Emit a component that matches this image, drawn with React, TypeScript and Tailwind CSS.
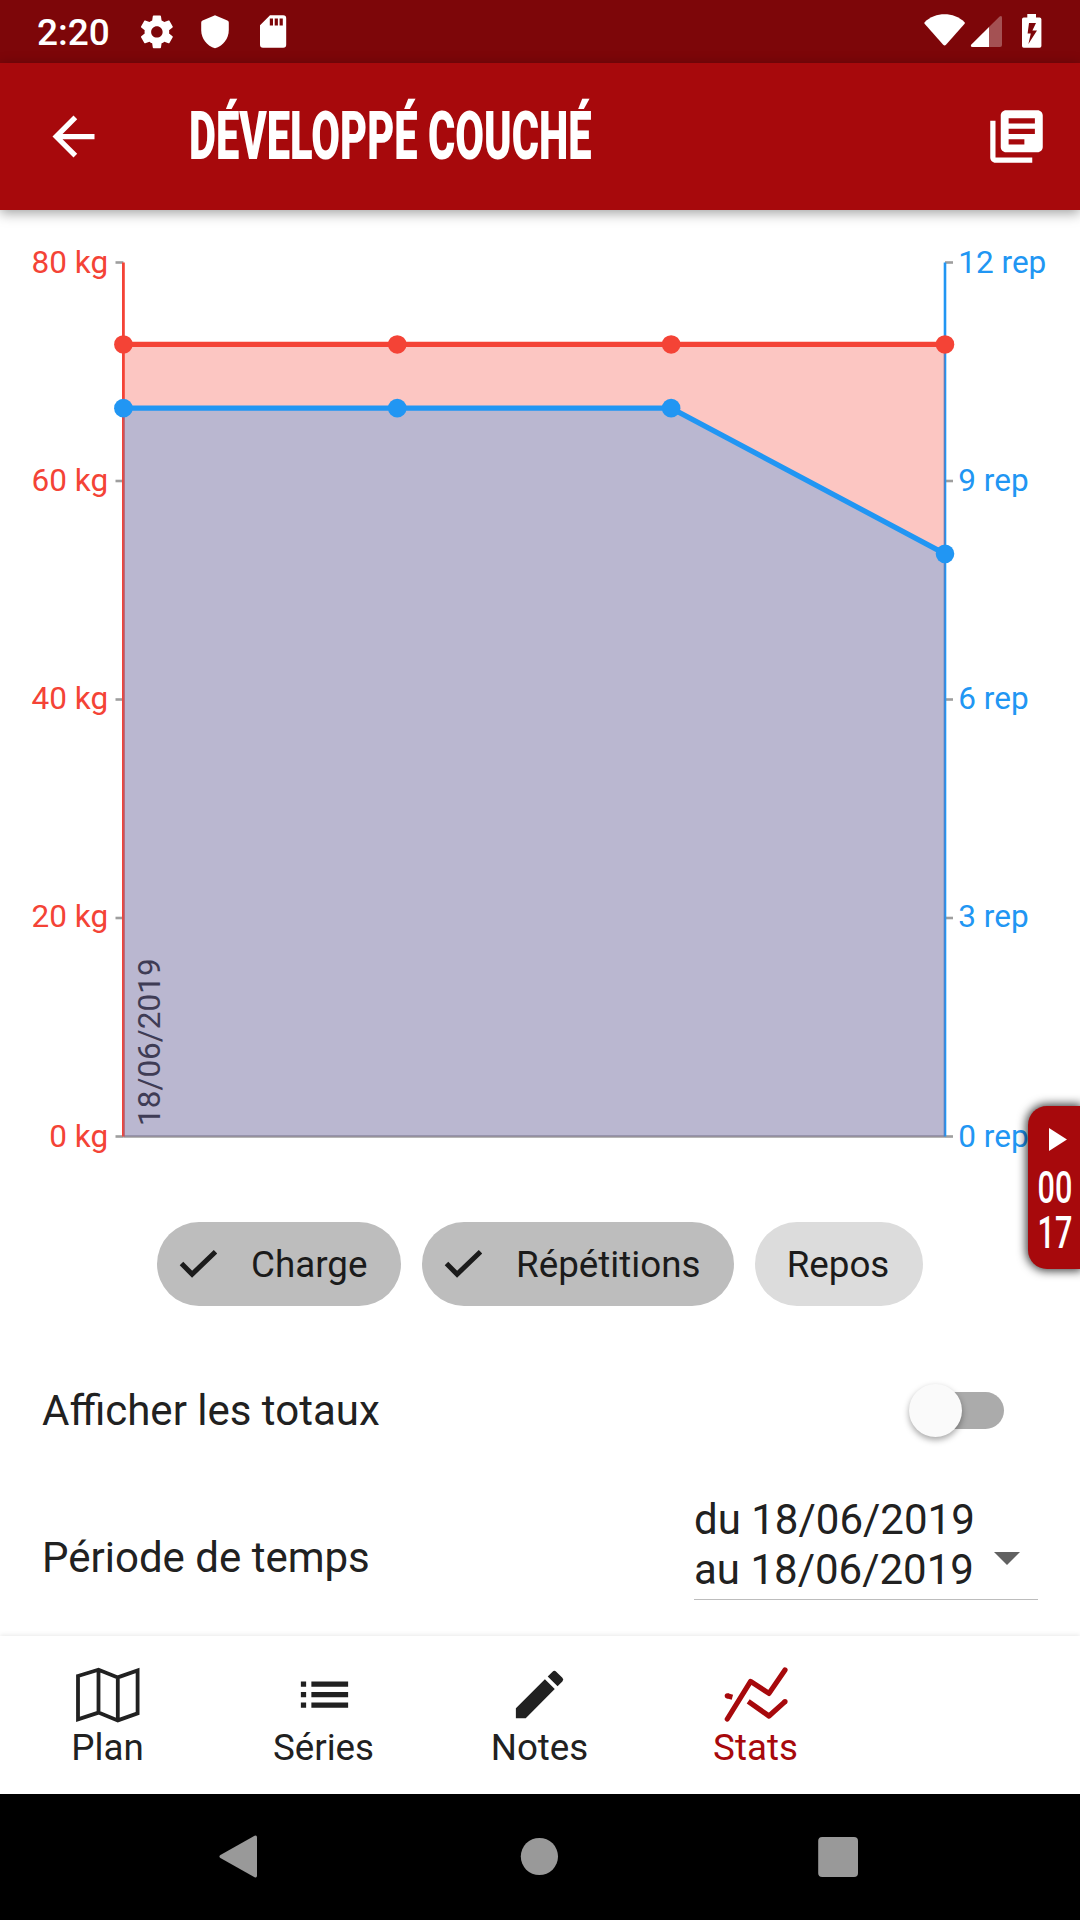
import type { ReactNode } from "react";
import { MdArrowBack, MdEdit, MdLibraryBooks } from "react-icons/md";

const X0 = 123.4;
const X1 = 945;
const Y_TOP = 262.5;
const Y_BASE = 1136.5;

const loads = [72.5, 72.5, 72.5, 72.5];
const reps = [10, 10, 10, 8];

const leftTicks = [80, 60, 40, 20, 0];
const rightTicks = [12, 9, 6, 3, 0];

// text baseline relative to each tick, top to bottom
const labelOffsets = [10.4, 10, 9, 8.8, 10.4];

type Point = { x: number; y: number };

function toPoints(values: number[], max: number): Point[] {
  return values.map((value, i) => ({
    x: X0 + ((X1 - X0) * i) / (values.length - 1),
    y: Y_BASE - ((Y_BASE - Y_TOP) * value) / max,
  }));
}

function join(points: Point[]) {
  return points.map((p) => `${p.x},${p.y}`).join(" ");
}

function tickY(i: number) {
  return Y_TOP + ((Y_BASE - Y_TOP) * i) / 4;
}

function StatusBar() {
  return (
    <div className="flex h-[63px] items-center bg-[#7d0609] text-white">
      <span className="ml-[37px] w-[74px] pt-px text-[37px] leading-[63px] font-medium">2:20</span>
      <svg className="ml-[26px] h-[63px] w-[160px]" viewBox="137 0 160 63" fill="currentColor">
        <path
          transform="translate(137.2 12.2) scale(1.64)"
          fillRule="evenodd"
          d="M19.43 12.98c.04-.32.07-.64.07-.98s-.03-.66-.07-.98l2.11-1.65c.19-.15.24-.42.12-.64l-2-3.46c-.12-.22-.39-.3-.61-.22l-2.49 1c-.52-.4-1.08-.73-1.69-.98l-.38-2.65C14.46 2.18 14.25 2 14 2h-4c-.25 0-.46.18-.49.42l-.38 2.65c-.61.25-1.17.59-1.69.98l-2.49-1c-.23-.09-.49 0-.61.22l-2 3.46c-.13.22-.07.49.12.64l2.11 1.65c-.04.32-.07.65-.07.98s.03.66.07.98l-2.11 1.65c-.19.15-.24.42-.12.64l2 3.46c.12.22.39.3.61.22l2.49-1c.52.4 1.08.73 1.69.98l.38 2.65c.03.24.24.42.49.42h4c.25 0 .46-.18.49-.42l.38-2.65c.61-.25 1.17-.59 1.69-.98l2.49 1c.23.09.49 0 .61-.22l2-3.46c.12-.22.07-.49-.12-.64l-2.11-1.65zM12 15.5c-1.93 0-3.5-1.57-3.5-3.5s1.57-3.5 3.5-3.5 3.5 1.57 3.5 3.5-1.57 3.5-3.5 3.5z"
        />
        <path d="M215 15.3 227.4 20.6Q228.8 21.2 228.8 22.8V30C228.8 38.6 223 46 215 48.2 207 46 201.2 38.6 201.2 30V22.8Q201.2 21.2 202.6 20.6Z" />
        <path
          fillRule="evenodd"
          d="M270 15.2H283.2Q286.2 15.2 286.2 18.2V44.8Q286.2 47.8 283.2 47.8H263Q260 47.8 260 44.8V25.2ZM269.8 18.5V25.5H273V18.5ZM274.7 18.5V25.5H277.9V18.5ZM279.6 18.5V25.5H282.8V18.5Z"
        />
      </svg>
      <svg className="mr-[36px] ml-auto h-[63px] w-[120px]" viewBox="924 0 120 63" fill="currentColor">
        <path d="M924.6 22.2C935.5 11.7 953.5 11.7 964.6 22.2Q965.2 23 964.6 23.8L946 44.8Q944.6 46.2 943.2 44.8L924.6 23.8Q924 23 924.6 22.2Z" />
        <path opacity="0.3" d="M989 27 999.6 16.4Q1002 15 1002 17.6V45Q1002 47 1000 47H989Z" />
        <path d="M989 27V47H972.5Q969.8 46.8 971.4 44.6Z" />
        <path
          fillRule="evenodd"
          d="M1027.3 14H1036V17.4H1039.6Q1041.4 17.4 1041.4 19.2V46Q1041.4 47.8 1039.6 47.8H1023.8Q1022 47.8 1022 46V19.2Q1022 17.4 1023.8 17.4H1027.3ZM1029 23 1027.6 33.6H1030.8L1028.4 44 1037 30.6H1032.4L1036 23Z"
        />
      </svg>
    </div>
  );
}

function AppBar() {
  return (
    <header className="relative z-10 flex h-[147px] items-center bg-[#a7090c] text-white shadow-[0_3px_12px_rgba(0,0,0,0.38)]">
      <MdArrowBack className="ml-[42px] size-[63px]" />
      <h1 className="ml-[84px] w-[420px] origin-left scale-x-[0.626] text-[66.5px] leading-[147px] font-black whitespace-nowrap">
        DÉVELOPPÉ COUCHÉ
      </h1>
      <MdLibraryBooks className="mr-[32px] ml-auto size-[63px]" />
    </header>
  );
}

function Area({ points, fill }: { points: Point[]; fill: string }) {
  return <polygon points={`${X0},${Y_BASE} ${join(points)} ${X1},${Y_BASE}`} fill={fill} />;
}

function Line({ points, color }: { points: Point[]; color: string }) {
  return (
    <g>
      <polyline points={join(points)} fill="none" stroke={color} strokeWidth="5.25" />
      {points.map((p) => (
        <circle key={p.x} cx={p.x} cy={p.y} r="9.3" fill={color} />
      ))}
    </g>
  );
}

function Chart() {
  const red = toPoints(loads, 80);
  const blue = toPoints(reps, 12);

  return (
    <svg className="block h-[960px] w-[1080px] text-[31.5px]" viewBox="0 210 1080 960">
      {leftTicks.map((tick, i) => (
        <g key={tick}>
          <path d={`M115.5 ${tickY(i)}H${X0}`} stroke="#9e9e9e" strokeWidth="2.6" />
          <text x="108.2" y={tickY(i) + labelOffsets[i]} textAnchor="end" fill="#f44336">
            {tick} kg
          </text>
        </g>
      ))}
      {rightTicks.map((tick, i) => (
        <g key={tick}>
          <path d={`M${X1} ${tickY(i)}H953`} stroke="#9e9e9e" strokeWidth="2.6" />
          <text x="958.3" y={tickY(i) + labelOffsets[i]} fill="#2196f3">
            {tick} rep
          </text>
        </g>
      ))}
      <path d={`M${X0} ${Y_BASE}H${X1}`} stroke="#9e9e9e" strokeWidth="2.6" />
      <path d={`M${X0} ${Y_TOP}V${Y_BASE}`} stroke="#f44336" strokeWidth="2.8" />
      <path d={`M${X1} ${Y_TOP}V${Y_BASE}`} stroke="#2196f3" strokeWidth="2.6" />
      <Area points={red} fill="rgba(244,67,54,0.3)" />
      <Area points={blue} fill="rgba(33,150,243,0.3)" />
      <Line points={red} color="#f44336" />
      <Line points={blue} color="#2196f3" />
      <text transform="translate(160 1126) rotate(-90)" fill="#3f3c55">
        18/06/2019
      </text>
    </svg>
  );
}

function Chip({ label, selected, className }: { label: string; selected?: boolean; className: string }) {
  return (
    <button className={`flex h-[84px] items-center rounded-full text-[36.75px] text-[#1b1b1b] ${className}`}>
      {selected && (
        <svg className="mr-[34px] ml-[22px] h-[28px] w-[38px]" viewBox="0 0 38 28" fill="none">
          <path d="M2.5 13.6 13.1 24.2 36.5 1.8" stroke="currentColor" strokeWidth="5" />
        </svg>
      )}
      <span className="pt-[2px] leading-[84px]">{label}</span>
    </button>
  );
}

function Timer() {
  return (
    <div className="absolute top-[1106px] right-0 z-20 flex h-[163px] w-[52px] flex-col items-center rounded-l-[19px] bg-[#a7090c] text-white shadow-[0_0_10px_2px_rgba(0,0,0,0.75)]">
      <svg className="mt-[22px] ml-[7px] h-[23px] w-[18px] shrink-0" viewBox="0 0 18 23" fill="currentColor">
        <path d="M0 0 18 11.5 0 23Z" />
      </svg>
      <p className="mt-[14px] ml-[2px] w-[52px] scale-x-[0.68] text-center text-[45px] leading-[45px] font-medium">
        00 17
      </p>
    </div>
  );
}

function Tab({ label, active, children }: { label: string; active?: boolean; children: ReactNode }) {
  return (
    <a
      className={
        active
          ? "flex w-[216px] flex-col items-center text-[#a7090c]"
          : "flex w-[216px] flex-col items-center text-[#212121]"
      }
    >
      <div className="mt-[27px] flex h-[63px] items-center">{children}</div>
      <span className="pt-px pr-px text-[36.75px] leading-[42px]">{label}</span>
    </a>
  );
}

function TabBar() {
  return (
    <nav className="flex h-[158px] bg-white shadow-[0_-1px_5px_rgba(0,0,0,0.09)]">
      <Tab label="Plan">
        <svg className="h-[56px] w-[66px]" viewBox="75 1667 66 56" fill="none" stroke="currentColor" strokeWidth="3.8">
          <path d="M78 1676 98.5 1669.8 117.8 1677.4 137.6 1670.4V1713.4L117.8 1720.4 98.5 1712.6 78 1719.4ZM98.5 1670V1713M117.8 1677V1720" />
        </svg>
      </Tab>
      <Tab label="Séries">
        <svg className="size-[63px]" viewBox="0 0 24 24" fill="currentColor">
          <path d="M3 13h2v-2H3v2zm0 4h2v-2H3v2zm0-8h2V7H3v2zm4 4h14v-2H7v2zm0 4h14v-2H7v2zM7 7v2h14V7H7z" />
        </svg>
      </Tab>
      <Tab label="Notes">
        <MdEdit className="mr-px size-[63px]" />
      </Tab>
      <Tab label="Stats" active>
        <svg
          className="h-[56px] w-[66px]"
          viewBox="723 1667 66 56"
          fill="none"
          stroke="currentColor"
          strokeWidth="5.2"
          strokeLinejoin="round"
        >
          <path strokeLinecap="round" d="M727.3 1719 750.6 1681.4 769 1693.4 785 1670" />
          <path d="M748.2 1701.4 769 1716 785 1701.6" />
          <circle cx="785" cy="1701.6" r="2.6" fill="currentColor" stroke="none" />
          <circle cx="727.3" cy="1695.8" r="2.6" fill="currentColor" stroke="none" />
          <path d="M727.3 1695.8 732.4 1697.2" />
        </svg>
      </Tab>
    </nav>
  );
}

function SystemNav() {
  return (
    <div className="h-[126px] bg-black">
      <svg className="block h-[126px] w-[1080px]" viewBox="0 1794 1080 126" fill="#999999">
        <path d="M220.4 1855 254.6 1835.8Q257 1834.8 257 1837.4V1875.6Q257 1878.2 254.6 1877.2L220.4 1858Q218.4 1856.5 220.4 1855Z" />
        <circle cx="539.4" cy="1856.5" r="18.6" />
        <rect x="818.2" y="1837" width="39.8" height="40" rx="4" />
      </svg>
    </div>
  );
}

export default function App() {
  return (
    <div className="relative flex h-[1920px] w-[1080px] flex-col overflow-hidden bg-white font-['Roboto',sans-serif] text-[#212121]">
      <StatusBar />
      <AppBar />
      <main className="h-[1426px]">
        <Chart />
        <div className="mt-[52px] flex gap-[21px] pl-[157px]">
          <Chip label="Charge" selected className="w-[244px] bg-[#bdbdbd]" />
          <Chip label="Répétitions" selected className="w-[312px] bg-[#bdbdbd]" />
          <Chip label="Repos" className="w-[168px] justify-center bg-[#dcdcdc] pr-[2px]" />
        </div>
        <div className="mt-[41px] flex h-[126px] items-center justify-between pr-[76px] pl-[42px] text-[42px]">
          <span>Afficher les totaux</span>
          <div className="flex h-[37px] w-[87px] items-center rounded-full bg-[#ababab]">
            <span className="-ml-[8px] size-[53px] shrink-0 rounded-full bg-[#fafafa] shadow-[0_3px_6px_rgba(0,0,0,0.35)]" />
          </div>
        </div>
        <div className="flex items-start justify-between pt-[22px] pr-[42px] pl-[42px] text-[42px] leading-[50px]">
          <span className="pt-[38px]">Période de temps</span>
          <div className="flex h-[105px] w-[344px] items-start border-b border-[#bdbdbd]">
            <div className="whitespace-nowrap">
              <div>du 18/06/2019</div>
              <div>au 18/06/2019</div>
            </div>
            <svg className="mt-[57px] mr-[18px] ml-auto h-[13px] w-[26px]" viewBox="0 0 26 13" fill="#616161">
              <path d="M0 0H26L13 13Z" />
            </svg>
          </div>
        </div>
      </main>
      <TabBar />
      <SystemNav />
      <Timer />
    </div>
  );
}
